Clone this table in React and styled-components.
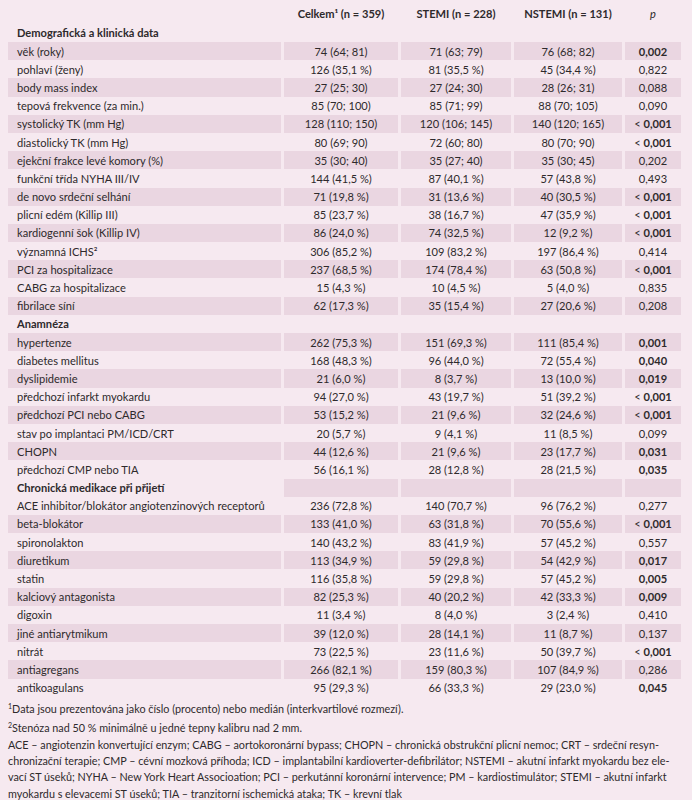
import React from "react";
import styled, { createGlobalStyle } from "styled-components";

const Global = createGlobalStyle`
  html, body { margin: 0; padding: 0; background: #f6e9f0; }
  body { font-family: Lato, "Open Sans", sans-serif; color: #2e2a2c; }
`;

const Page = styled.div`
  width: 692px;
  height: 800px;
  overflow: hidden;
  box-sizing: border-box;
  padding: 4px 11px 0 8px;
  background: #f6e9f0;
  font-size: 11.1px;
`;

const Row = styled.div`
  display: grid;
  grid-template-columns: 273px 114px 110px 108px 56px;
  column-gap: 3px;
  height: ${(p) => p.$h || 18.2}px;
`;

const Cell = styled.div`
  display: flex;
  align-items: center;
  justify-content: ${(p) => (p.$left ? "flex-start" : "center")};
  padding-left: ${(p) => (p.$left ? "9px" : "0")};
  background: ${(p) => (p.$shade ? "#ead6e1" : "transparent")};
  font-weight: ${(p) => (p.$bold ? 700 : 400)};
  font-style: ${(p) => (p.$italic ? "italic" : "normal")};
  white-space: nowrap;
`;

const Notes = styled.div`
  padding-top: 1px;
  line-height: 16.4px;
  font-size: 10.8px;
`;

const NoteLine = styled.div`
  white-space: nowrap;
`;

const Sup = styled.span`
  font-size: 7px;
  vertical-align: 4px;
`;

const sections = [
  {
    title: "Demografická a klinická data",
    rows: [
      ["věk (roky)", "74 (64; 81)", "71 (63; 79)", "76 (68; 82)", "0,002", true],
      ["pohlaví (ženy)", "126 (35,1 %)", "81 (35,5 %)", "45 (34,4 %)", "0,822", false],
      ["body mass index", "27 (25; 30)", "27 (24; 30)", "28 (26; 31)", "0,088", false],
      ["tepová frekvence (za min.)", "85 (70; 100)", "85 (71; 99)", "88 (70; 105)", "0,090", false],
      ["systolický TK (mm Hg)", "128 (110; 150)", "120 (106; 145)", "140 (120; 165)", "< 0,001", true],
      ["diastolický TK (mm Hg)", "80 (69; 90)", "72 (60; 80)", "80 (70; 90)", "< 0,001", true],
      ["ejekční frakce levé komory (%)", "35 (30; 40)", "35 (27; 40)", "35 (30; 45)", "0,202", false],
      ["funkční třída NYHA III/IV", "144 (41,5 %)", "87 (40,1 %)", "57 (43,8 %)", "0,493", false],
      ["de novo srdeční selhání", "71 (19,8 %)", "31 (13,6 %)", "40 (30,5 %)", "< 0,001", true],
      ["plicní edém (Killip III)", "85 (23,7 %)", "38 (16,7 %)", "47 (35,9 %)", "< 0,001", true],
      ["kardiogenní šok (Killip IV)", "86 (24,0 %)", "74 (32,5 %)", "12 (9,2 %)", "< 0,001", true],
      ["významná ICHS²", "306 (85,2 %)", "109 (83,2 %)", "197 (86,4 %)", "0,414", false],
      ["PCI za hospitalizace", "237 (68,5 %)", "174 (78,4 %)", "63 (50,8 %)", "< 0,001", true],
      ["CABG za hospitalizace", "15 (4,3 %)", "10 (4,5 %)", "5 (4,0 %)", "0,835", false],
      ["fibrilace síní", "62 (17,3 %)", "35 (15,4 %)", "27 (20,6 %)", "0,208", false],
    ],
  },
  {
    title: "Anamnéza",
    rows: [
      ["hypertenze", "262 (75,3 %)", "151 (69,3 %)", "111 (85,4 %)", "0,001", true],
      ["diabetes mellitus", "168 (48,3 %)", "96 (44,0 %)", "72 (55,4 %)", "0,040", true],
      ["dyslipidemie", "21 (6,0 %)", "8 (3,7 %)", "13 (10,0 %)", "0,019", true],
      ["předchozí infarkt myokardu", "94 (27,0 %)", "43 (19,7 %)", "51 (39,2 %)", "< 0,001", true],
      ["předchozí PCI nebo CABG", "53 (15,2 %)", "21 (9,6 %)", "32 (24,6 %)", "< 0,001", true],
      ["stav po implantaci PM/ICD/CRT", "20 (5,7 %)", "9 (4,1 %)", "11 (8,5 %)", "0,099", false],
      ["CHOPN", "44 (12,6 %)", "21 (9,6 %)", "23 (17,7 %)", "0,031", true],
      ["předchozí CMP nebo TIA", "56 (16,1 %)", "28 (12,8 %)", "28 (21,5 %)", "0,035", true],
    ],
  },
  {
    title: "Chronická medikace při přijetí",
    rows: [
      ["ACE inhibitor/blokátor angiotenzinových receptorů", "236 (72,8 %)", "140 (70,7 %)", "96 (76,2 %)", "0,277", false],
      ["beta-blokátor", "133 (41,0 %)", "63 (31,8 %)", "70 (55,6 %)", "< 0,001", true],
      ["spironolakton", "140 (43,2 %)", "83 (41,9 %)", "57 (45,2 %)", "0,557", false],
      ["diuretikum", "113 (34,9 %)", "59 (29,8 %)", "54 (42,9 %)", "0,017", true],
      ["statin", "116 (35,8 %)", "59 (29,8 %)", "57 (45,2 %)", "0,005", true],
      ["kalciový antagonista", "82 (25,3 %)", "40 (20,2 %)", "42 (33,3 %)", "0,009", true],
      ["digoxin", "11 (3,4 %)", "8 (4,0 %)", "3 (2,4 %)", "0,410", false],
      ["jiné antiarytmikum", "39 (12,0 %)", "28 (14,1 %)", "11 (8,7 %)", "0,137", false],
      ["nitrát", "73 (22,5 %)", "23 (11,6 %)", "50 (39,7 %)", "< 0,001", true],
      ["antiagregans", "266 (82,1 %)", "159 (80,3 %)", "107 (84,9 %)", "0,286", false],
      ["antikoagulans", "95 (29,3 %)", "66 (33,3 %)", "29 (23,0 %)", "0,045", true],
    ],
  },
];

const Lt = styled.span`
  font-weight: 400;
`;

const PValue = ({ v }) => {
  if (v.startsWith("< ")) {
    return (
      <>
        <Lt>&lt;&nbsp;</Lt>
        {v.slice(2)}
      </>
    );
  }
  return v;
};

export default function App() {
  let idx = 0;
  const body = [];
  sections.forEach((sec, si) => {
    const headShade = idx % 2 === 1;
    body.push(
      <Row key={"s" + si} $h={si === 0 ? 19 : 18.2}>
        <Cell $left $bold>{sec.title}</Cell>
        <Cell $shade={headShade} />
        <Cell $shade={headShade} />
        <Cell $shade={headShade} />
        <Cell $shade={headShade} />
      </Row>
    );
    idx++;
    sec.rows.forEach((r, ri) => {
      const shade = idx % 2 === 1;
      body.push(
        <Row key={si + "-" + ri}>
          <Cell $left $shade={shade}>{r[0]}</Cell>
          <Cell $shade={shade}>{r[1]}</Cell>
          <Cell $shade={shade}>{r[2]}</Cell>
          <Cell $shade={shade}>{r[3]}</Cell>
          <Cell $shade={shade} $bold={r[5]}>
            <PValue v={r[4]} />
          </Cell>
        </Row>
      );
      idx++;
    });
  });

  return (
    <>
      <Global />
      <Page>
        <Row $h={19}>
          <Cell />
          <Cell $bold>Celkem¹ (n = 359)</Cell>
          <Cell $bold>STEMI (n = 228)</Cell>
          <Cell $bold>NSTEMI (n = 131)</Cell>
          <Cell $italic>p</Cell>
        </Row>
        {body}
        <Notes>
          <NoteLine>
            <Sup>1</Sup>Data jsou prezentována jako číslo (procento) nebo medián (interkvartilové rozmezí).
          </NoteLine>
          <NoteLine>
            <Sup>2</Sup>Stenóza nad 50 % minimálně u jedné tepny kalibru nad 2 mm.
          </NoteLine>
          <NoteLine>
            ACE – angiotenzin konvertující enzym; CABG – aortokoronární bypass; CHOPN – chronická obstrukční plicní nemoc; CRT – srdeční resyn-
          </NoteLine>
          <NoteLine>
            chronizační terapie; CMP – cévní mozková příhoda; ICD – implantabilní kardioverter-defibrilátor; NSTEMI – akutní infarkt myokardu bez ele-
          </NoteLine>
          <NoteLine>
            vací ST úseků; NYHA – New York Heart Associoation; PCI – perkutánní koronární intervence; PM – kardiostimulátor; STEMI – akutní infarkt
          </NoteLine>
          <NoteLine>
            myokardu s elevacemi ST úseků; TIA – tranzitorní ischemická ataka; TK – krevní tlak
          </NoteLine>
        </Notes>
      </Page>
    </>
  );
}
